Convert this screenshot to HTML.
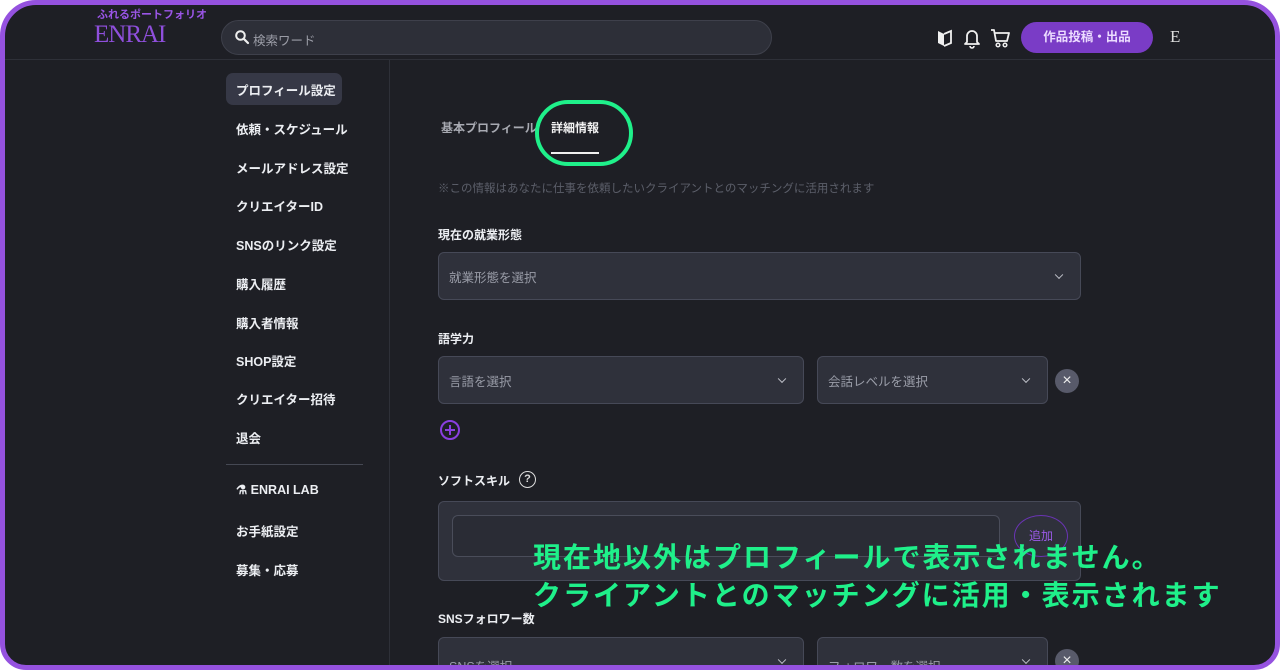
<!DOCTYPE html>
<html><head><meta charset="utf-8"><style>
*{box-sizing:border-box;margin:0;padding:0}
html,body{width:1280px;height:670px;overflow:hidden;background:#fff}
body{font-family:"Liberation Sans","Noto Sans CJK JP",sans-serif;position:relative}
.frame{position:absolute;left:0;top:0;width:1280px;height:670px;border:5px solid #9552df;border-radius:36px 36px 26px 26px;background:#1e1f25;overflow:hidden}
.c{position:absolute;left:-5px;top:-5px;width:1280px;height:670px}
.abs{position:absolute}
.hdr{position:absolute;left:0;top:0;width:1280px;height:60px;border-bottom:1px solid #2e3038}
.side{position:absolute;left:389px;top:60px;width:1px;height:620px;background:#2e3038}
.nav{position:absolute;left:236px;font-size:12.5px;font-weight:bold;color:#eceef2;white-space:nowrap}
.lbl{position:absolute;left:438px;font-size:12px;font-weight:bold;color:#eceef2}
.sel{position:absolute;background:#2f313b;border:1px solid #464957;border-radius:6px;font-size:12.5px;color:#9a9da8;padding-left:10px;display:flex;align-items:center}
.sel.dd::after{content:"";position:absolute;right:18px;top:50%;width:5px;height:5px;border-right:1.3px solid #c0c2ca;border-bottom:1.3px solid #c0c2ca;transform:translateY(-70%) rotate(45deg)}
.x{position:absolute;width:24px;height:24px;border-radius:50%;background:#585a6a;color:#eee;font-size:16px;text-align:center;line-height:24px}
.ann{position:absolute;left:533px;font-size:28px;font-weight:bold;color:#1ff08a;white-space:nowrap;letter-spacing:2px}
</style></head><body>
<div class="frame"><div class="c">
<div class="hdr"></div>
<div class="abs" style="left:97px;top:6px;font-size:11px;font-weight:bold;color:#9a55e6">ふれるポートフォリオ</div>
<div class="abs" style="left:94px;top:21px;font-family:'Liberation Serif',serif;font-size:25px;color:#8f4fdc;letter-spacing:-1px">ENRAI</div>
<div class="abs" style="left:221px;top:20px;width:551px;height:35px;border-radius:18px;background:#2d2f38;border:1px solid #3e404b"></div>
<svg class="abs" style="left:234px;top:29px" width="16" height="16" viewBox="0 0 16 16"><circle cx="6.5" cy="6.5" r="4.3" fill="none" stroke="#eee" stroke-width="2"/><path d="M9.8 9.8L14 14" stroke="#eee" stroke-width="2.2" stroke-linecap="round"/></svg>
<div class="abs" style="left:253px;top:30px;font-size:12.5px;color:#9a9ca6">検索ワード</div>
<svg class="abs" style="left:936px;top:28px" width="18" height="20" viewBox="0 0 18 20"><path d="M2 3L8 6V18L2 15Z" fill="#f0f0f0"/><path d="M8 6L15 3V15L8 18" fill="none" stroke="#f0f0f0" stroke-width="1.8"/></svg>
<svg class="abs" style="left:963px;top:27px" width="18" height="22" viewBox="0 0 18 22"><path d="M4 15V9a5 5 0 0110 0v6l2 2H2z" fill="none" stroke="#f0f0f0" stroke-width="1.8" stroke-linejoin="round"/><path d="M7 19a2 2 0 004 0" fill="none" stroke="#f0f0f0" stroke-width="1.6"/></svg>
<svg class="abs" style="left:990px;top:27px" width="20" height="22" viewBox="0 0 20 22"><path d="M1 3h3l2 11h11l2-8H5" fill="none" stroke="#f0f0f0" stroke-width="1.8" stroke-linejoin="round"/><circle cx="8" cy="18" r="1.8" fill="none" stroke="#f0f0f0" stroke-width="1.5"/><circle cx="15" cy="18" r="1.8" fill="none" stroke="#f0f0f0" stroke-width="1.5"/></svg>
<div class="abs" style="left:1021px;top:22px;width:132px;height:31px;border-radius:16px;background:#7a3cc6;color:#ecdcff;font-size:12.5px;font-weight:bold;text-align:center;line-height:31px">作品投稿・出品</div>
<div class="abs" style="left:1170px;top:27px;font-family:'Liberation Serif',serif;font-size:17px;color:#ddd">E</div>
<div class="side"></div>
<div class="abs" style="left:226px;top:73px;width:116px;height:32px;border-radius:7px;background:#363846"></div>
<div class="nav" style="top:80px">プロフィール設定</div>
<div class="nav" style="top:119px">依頼・スケジュール</div>
<div class="nav" style="top:158px">メールアドレス設定</div>
<div class="nav" style="top:196px">クリエイターID</div>
<div class="nav" style="top:235px">SNSのリンク設定</div>
<div class="nav" style="top:274px">購入履歴</div>
<div class="nav" style="top:313px">購入者情報</div>
<div class="nav" style="top:351px">SHOP設定</div>
<div class="nav" style="top:389px">クリエイター招待</div>
<div class="nav" style="top:428px">退会</div>
<div class="abs" style="left:226px;top:464px;width:137px;height:1px;background:#454853"></div>
<div class="nav" style="top:482px">⚗ ENRAI LAB</div>
<div class="nav" style="top:521px">お手紙設定</div>
<div class="nav" style="top:560px">募集・応募</div>
<div class="abs" style="left:441px;top:119px;font-size:12px;font-weight:bold;color:#a8aab2">基本プロフィール</div>
<div class="abs" style="left:551px;top:119px;font-size:12px;font-weight:bold;color:#f2f2f2">詳細情報</div>
<div class="abs" style="left:551px;top:152px;width:48px;height:2px;background:#f0f0f0"></div>
<div class="abs" style="left:535px;top:100px;width:98px;height:66px;border:4px solid #1ff08a;border-radius:33px"></div>
<div class="abs" style="left:438px;top:180px;font-size:11.5px;color:#5c5f6a">※この情報はあなたに仕事を依頼したいクライアントとのマッチングに活用されます</div>
<div class="lbl" style="top:226px">現在の就業形態</div>
<div class="sel dd" style="left:438px;top:252px;width:643px;height:48px">就業形態を選択</div>
<div class="lbl" style="top:330px">語学力</div>
<div class="sel dd" style="left:438px;top:356px;width:366px;height:48px">言語を選択</div>
<div class="sel dd" style="left:817px;top:356px;width:231px;height:48px">会話レベルを選択</div>
<div class="x" style="left:1055px;top:369px">×</div>
<svg class="abs" style="left:439px;top:419px" width="22" height="22" viewBox="0 0 22 22"><circle cx="11" cy="11" r="9" fill="none" stroke="#8a3fe0" stroke-width="2"/><path d="M11 6v10M6 11h10" stroke="#8a3fe0" stroke-width="2"/></svg>
<div class="lbl" style="top:472px">ソフトスキル</div>
<div class="abs" style="left:519px;top:471px;width:17px;height:17px;border:1.5px solid #ddd;border-radius:50%;color:#ddd;font-size:11px;text-align:center;line-height:14px;font-weight:bold">?</div>
<div class="sel" style="left:438px;top:501px;width:643px;height:80px;padding:0"></div>
<div class="abs" style="left:452px;top:515px;width:548px;height:42px;border:1px solid #4a4d5a;border-radius:6px;background:#2a2c35"></div>
<div class="abs" style="left:1014px;top:515px;width:54px;height:42px;border:1px solid #6a34b4;border-radius:50%;color:#9b5ae8;font-size:12px;text-align:center;line-height:40px">追加</div>
<div class="lbl" style="top:610px">SNSフォロワー数</div>
<div class="sel dd" style="left:438px;top:637px;width:366px;height:48px;align-items:flex-start;padding-top:18px">SNSを選択</div>
<div class="sel dd" style="left:817px;top:637px;width:231px;height:48px;align-items:flex-start;padding-top:18px">フォロワー数を選択</div>
<div class="x" style="left:1055px;top:649px">×</div>
<div class="ann" style="top:536px">現在地以外はプロフィールで表示されません。</div>
<div class="ann" style="top:574px">クライアントとのマッチングに活用・表示されます</div>
</div></div>
</body></html>
